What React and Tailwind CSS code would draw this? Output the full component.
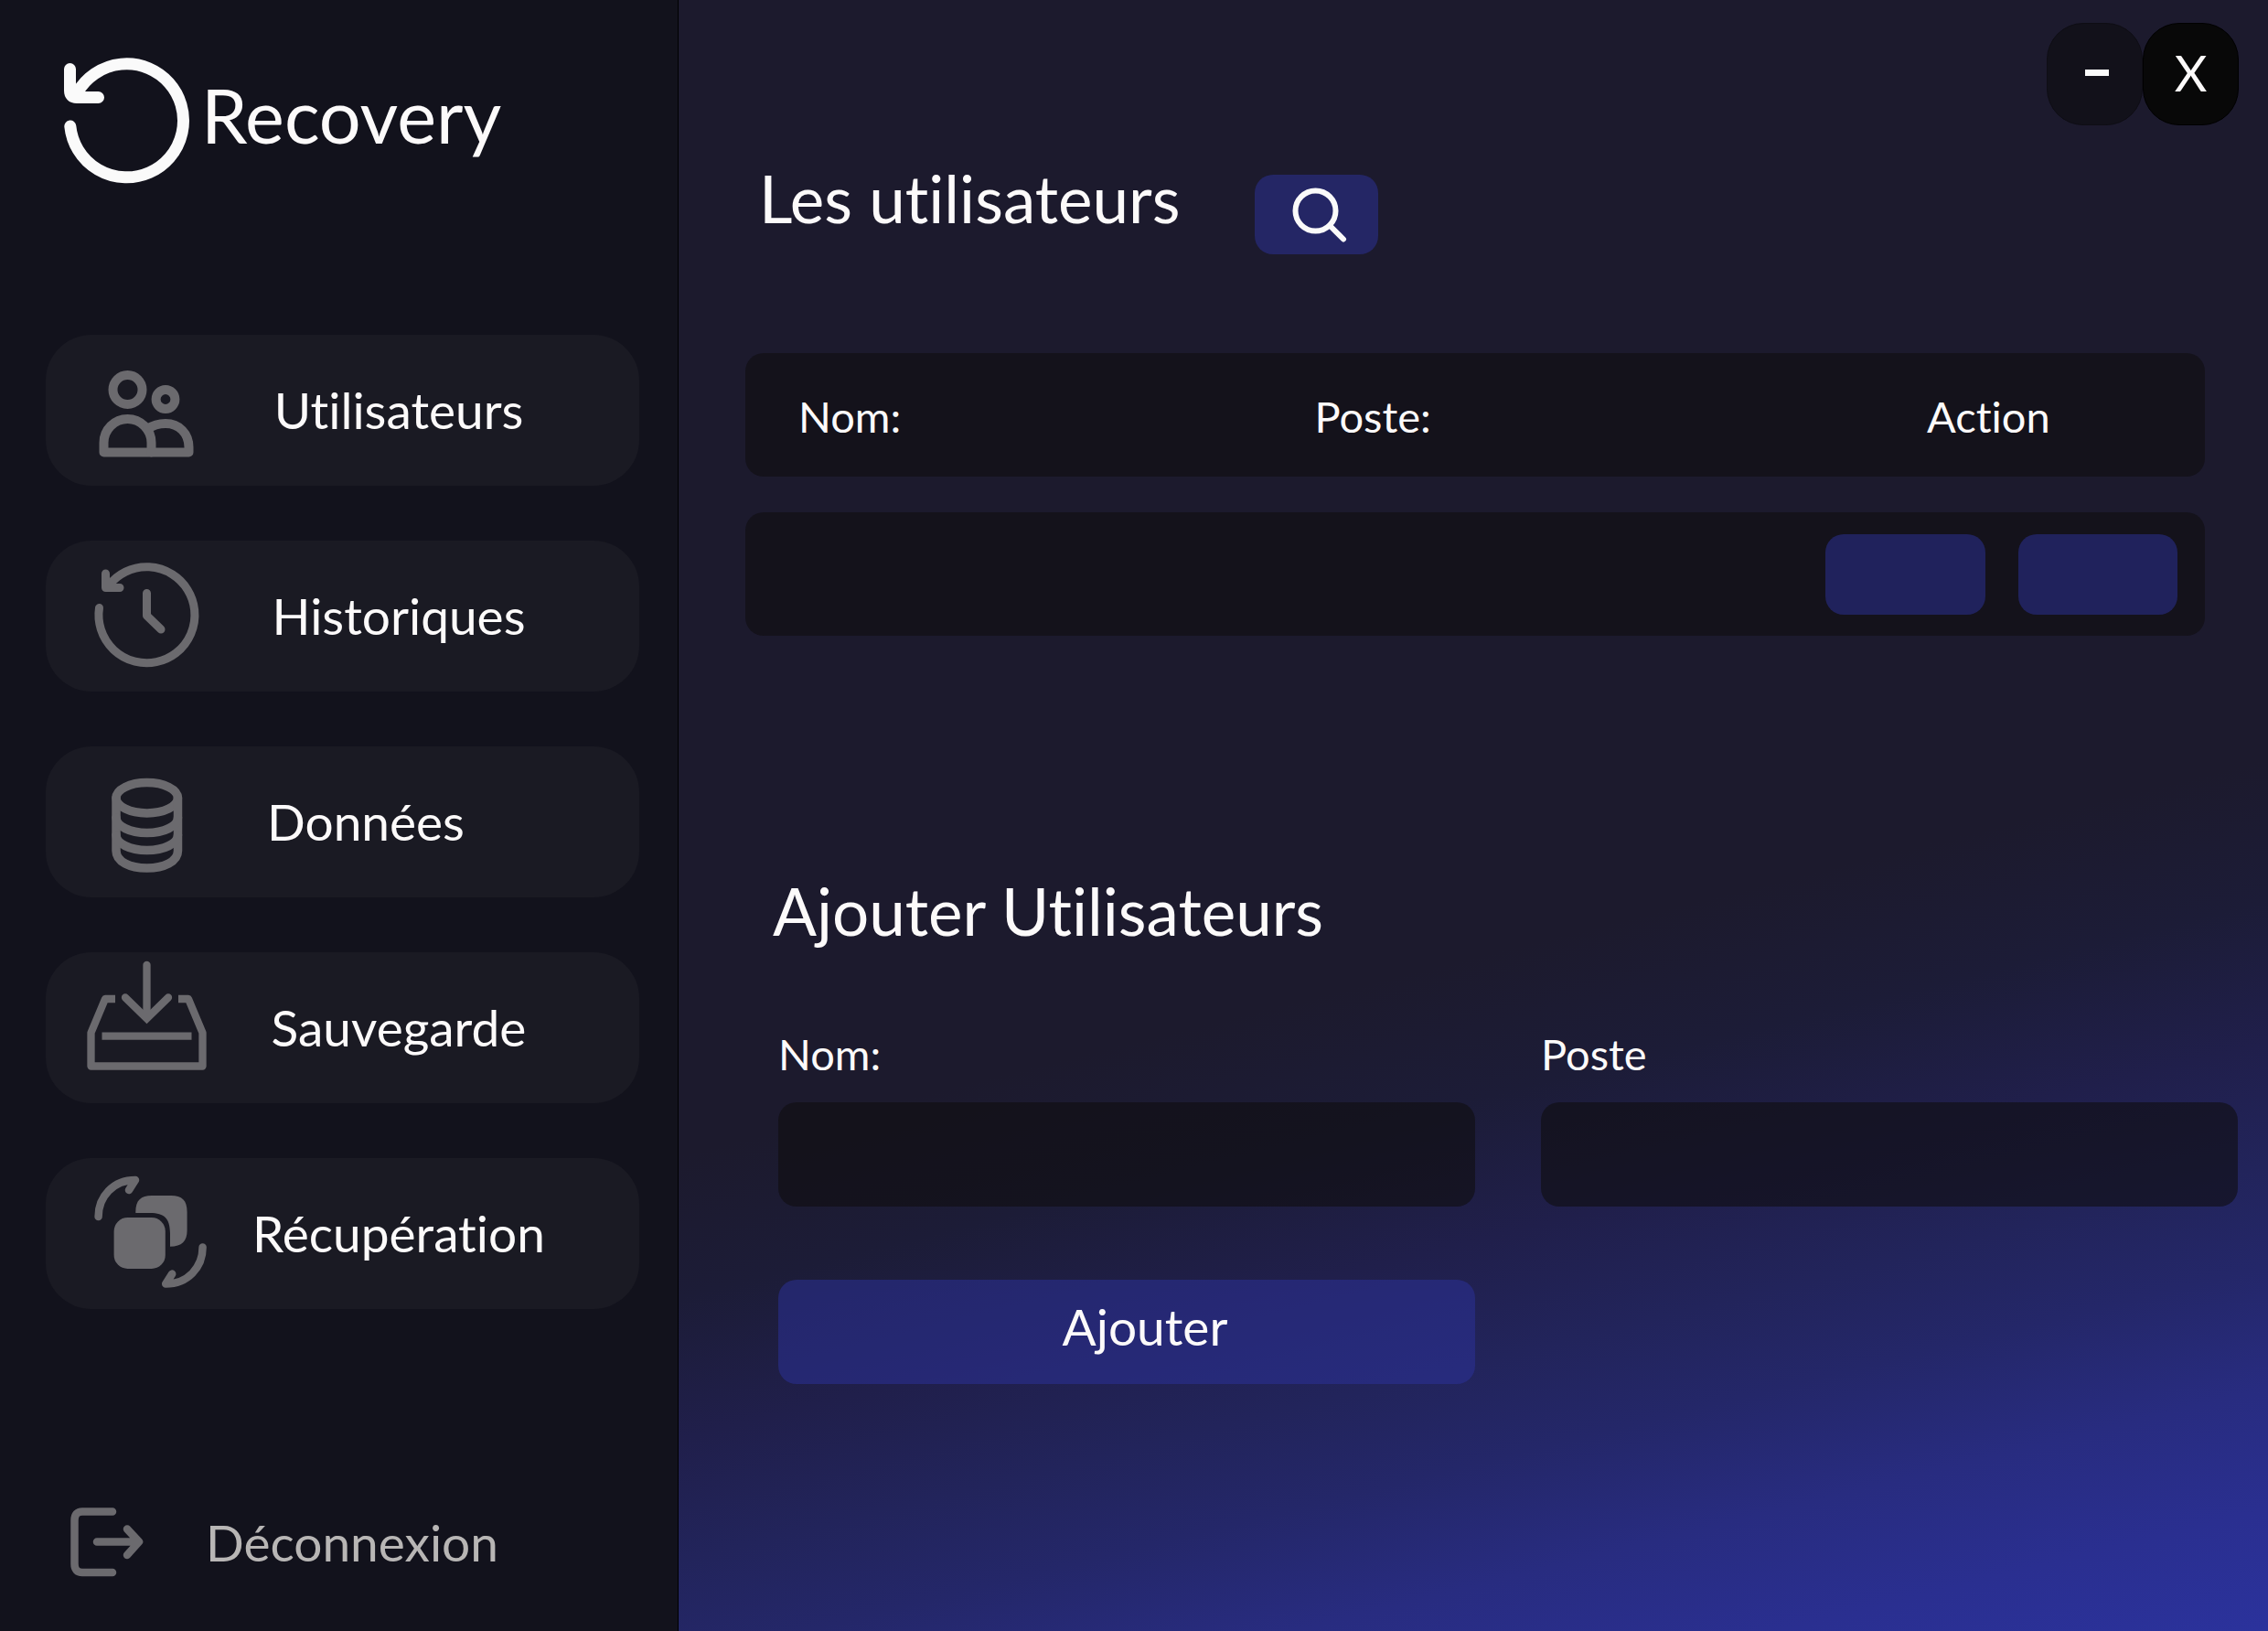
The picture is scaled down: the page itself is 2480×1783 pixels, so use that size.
import React from "react";

function LogoIcon() {
  return (
    <svg viewBox="0 0 138 152" className="h-[152px] w-[138px] shrink-0" fill="none" stroke="#fafafa" strokeWidth="13" strokeLinecap="round" aria-hidden="true">
      <path d="M6.8 89 A62 62 0 1 0 15 51.5" />
      <path d="M6.5 26.5 V50 Q6.5 57.5 14 57.5 H37.5" strokeLinejoin="round" />
    </svg>
  );
}

function NavIcon({ strokeWidth, children }) {
  return (
    <svg viewBox="0 0 140 165" className="h-[165px] w-[140px] shrink-0" fill="none" stroke="#6b6a6e" strokeWidth={strokeWidth} strokeLinecap="round" strokeLinejoin="round" aria-hidden="true">
      {children}
    </svg>
  );
}

function UsersIcon() {
  return (
    <NavIcon strokeWidth="10">
      <circle cx="49.5" cy="60" r="16" />
      <circle cx="91" cy="70.5" r="10.4" />
      <path d="M23.5 128.5 V118 A26 26 0 0 1 75.5 118 V128.5 Z" />
      <path d="M71 103 C77 99 83 97 91 97 C106 97 116.5 108 116.5 123 V128.5 H75.5" />
    </NavIcon>
  );
}

function HistoryIcon() {
  return (
    <NavIcon strokeWidth="9">
      <path d="M18.5 73.5 A52.5 52.5 0 1 0 29 49" />
      <path d="M25.5 36 V51.5 H41" />
      <path d="M70.5 57.5 V82 L86 97" />
    </NavIcon>
  );
}

function DatabaseIcon() {
  return (
    <NavIcon strokeWidth="9.5">
      <ellipse cx="70.7" cy="56.2" rx="33.7" ry="16.7" />
      <path d="M37 56 V114 C37 126 52 133 70.7 133 C89 133 104.5 126 104.5 114 V56" />
      <path d="M37 77.8 A33.7 16.7 0 0 0 104.5 77.8" />
      <path d="M37 96.8 A33.7 16.7 0 0 0 104.5 96.8" />
    </NavIcon>
  );
}

function SaveIcon() {
  return (
    <NavIcon strokeWidth="8.3">
      <path d="M70.5 14 V70" />
      <path d="M47 49.5 L70.5 72.5 L94 49.5" strokeLinejoin="miter" />
      <path d="M36 51 H25 L9.5 88 V124.5 H131.5 V88 L116 51 H105" strokeLinecap="butt" />
      <path d="M21.5 91.7 H119.5" strokeLinecap="butt" />
    </NavIcon>
  );
}

function RestoreIcon() {
  return (
    <NavIcon strokeWidth="8.5">
      <rect x="34.6" y="65" width="56.2" height="56" rx="15" fill="#6b6a6e" stroke="none" />
      <path d="M58.3 60 V59 C58.3 46 64 41 76 41 H97 C109 41 114.6 46 114.6 59 V79 C114.6 91 109 96.7 96 96.7 V82 C95.7 66 90 60 74 60 Z" fill="#6b6a6e" stroke="none" />
      <path d="M17.6 64 C17.6 42 34 24 58 24 L51 35" />
      <path d="M17.6 64 C17.6 42 34 24 58 24 L51 35" transform="rotate(180 74.6 80.8)" />
    </NavIcon>
  );
}

function LogoutIcon() {
  return (
    <svg viewBox="0 0 80 80" className="size-20 shrink-0" fill="none" stroke="#6b6a6e" strokeWidth="8.5" strokeLinecap="round" strokeLinejoin="round" aria-hidden="true">
      <path d="M46 6.5 H13 Q4.5 6.5 4.5 16 V63.5 Q4.5 73 13 73 H46" />
      <path d="M29 39.5 H74 M62 25.5 L75 39.5 L62 54" />
    </svg>
  );
}

function SearchIcon() {
  return (
    <svg viewBox="0 0 60 60" className="size-15 overflow-visible" fill="none" stroke="#fafafa" strokeWidth="6" strokeLinecap="round" aria-hidden="true">
      <circle cx="28.5" cy="25.5" r="22" />
      <path d="M44 41.5 L59 56.5" />
    </svg>
  );
}

const NAV = [
  { label: "Utilisateurs", Icon: UsersIcon, align: "text-center" },
  { label: "Historiques", Icon: HistoryIcon, align: "text-center" },
  { label: "Données", Icon: DatabaseIcon, align: "pl-4 text-left" },
  { label: "Sauvegarde", Icon: SaveIcon, align: "text-center" },
  { label: "Récupération", Icon: RestoreIcon, align: "text-center" },
];

function Sidebar() {
  return (
    <aside className="flex w-[30%] max-w-[742px] shrink-0 flex-col border-r border-black bg-[#12121c]">
      <div className="flex items-center gap-3 pt-[49px] pl-[70px]">
        <LogoIcon />
        <span className="text-[81px] leading-none">Recovery</span>
      </div>
      <nav className="mt-[165px] flex flex-col gap-[60px] pr-[42px] pl-[50px]">
        {NAV.map(({ label, Icon, align }) => (
          <button key={label} type="button" className="flex items-center gap-[46px] rounded-[50px] bg-[#1a1a23] pl-10">
            <Icon />
            <span className={`w-[320px] text-[55px] leading-none ${align}`}>{label}</span>
          </button>
        ))}
      </nav>
      <button type="button" className="mt-auto mb-[57px] ml-[77px] flex items-center gap-[68px] self-start text-[#b8b6b5]">
        <LogoutIcon />
        <span className="text-[55px] leading-none">Déconnexion</span>
      </button>
    </aside>
  );
}

function WindowControls() {
  return (
    <div className="flex justify-end pt-[25px] pr-8">
      <button type="button" aria-label="Réduire" className="flex h-[112px] w-[105px] items-center justify-center rounded-[40px] border border-[#0e0d14] bg-[#12111a] pb-1 pl-1">
        <span className="h-[7px] w-[26px] bg-[#fafafa]" />
      </button>
      <button type="button" aria-label="Fermer" className="flex h-[112px] w-[105px] items-center justify-center rounded-[40px] border border-black bg-[#080808] pb-1 text-[55px] leading-none">
        X
      </button>
    </div>
  );
}

function UserTable() {
  return (
    <table className="w-full border-separate border-spacing-x-0 border-spacing-y-[39px] text-left text-[47px] leading-none">
      <thead>
        <tr className="h-[135px]">
          <th className="w-[39%] rounded-l-[20px] bg-[#0f0d0f]/60 pt-1 pb-0 pl-[58px] font-normal">Nom:</th>
          <th className="bg-[#0f0d0f]/60 pt-1 pb-0 font-normal">Poste:</th>
          <th className="w-[415px] rounded-r-[20px] bg-[#0f0d0f]/60 pt-1 pb-0 pl-[111px] font-normal">Action</th>
        </tr>
      </thead>
      <tbody>
        <tr className="h-[135px]">
          <td className="rounded-l-[20px] bg-[#0f0d0f]/60" />
          <td className="bg-[#0f0d0f]/60" />
          <td className="rounded-r-[20px] bg-[#0f0d0f]/60 p-0">
            <div className="flex gap-9 pr-[30px]">
              <button type="button" aria-label="Modifier" className="h-[88px] flex-1 rounded-[20px] bg-[#2c329d]/50" />
              <button type="button" aria-label="Supprimer" className="h-[88px] flex-1 rounded-[20px] bg-[#2c329d]/50" />
            </div>
          </td>
        </tr>
      </tbody>
    </table>
  );
}

function Field({ id, label }) {
  return (
    <div className="flex flex-col gap-[23px]">
      <label htmlFor={id} className="text-[47px] leading-[60px]">{label}</label>
      <input id={id} type="text" className="h-[114px] w-full rounded-[20px] bg-[#0f0d0f]/60 px-8 text-[47px] outline-none" />
    </div>
  );
}

export default function App() {
  return (
    <div className="flex min-h-screen bg-[#1c1a2d] font-['Lato','Noto_Sans',sans-serif] text-[#fcfafa] [font-variant-ligatures:none]">
      <Sidebar />
      <main className="min-w-0 flex-1 bg-[linear-gradient(166deg,#1c1a2d_57%,#1c1c37_64%,#201f4b_71%,#22245b_77%,#242769_82%,#282c80_88%,#2a2f90_94%,#2b329c_100%)]">
        <WindowControls />
        <section className="pt-[54px] pr-[69px] pl-[73px]">
          <div className="flex items-start gap-[82px] pl-[15px]">
            <h1 className="text-[71px] leading-[52px]">Les utilisateurs</h1>
            <button type="button" aria-label="Rechercher" className="flex h-[87px] w-[135px] items-center justify-center rounded-[20px] bg-[#2c329d]/50">
              <SearchIcon />
            </button>
          </div>
          <div className="mt-[69px]">
            <UserTable />
          </div>
        </section>
        <form className="mt-[232px] pr-[33px] pl-[103px]" onSubmit={(e) => e.preventDefault()}>
          <h2 className="text-[71px] leading-[60px]">Ajouter Utilisateurs</h2>
          <div className="mt-24 grid grid-cols-2 gap-x-[72px] gap-y-20 pl-1.5">
            <Field id="nom" label="Nom:" />
            <Field id="poste" label="Poste" />
            <button type="submit" className="h-[114px] rounded-[20px] bg-[#2c329d]/50 pb-3 pl-10 text-[55px] leading-none">Ajouter</button>
          </div>
        </form>
      </main>
    </div>
  );
}
